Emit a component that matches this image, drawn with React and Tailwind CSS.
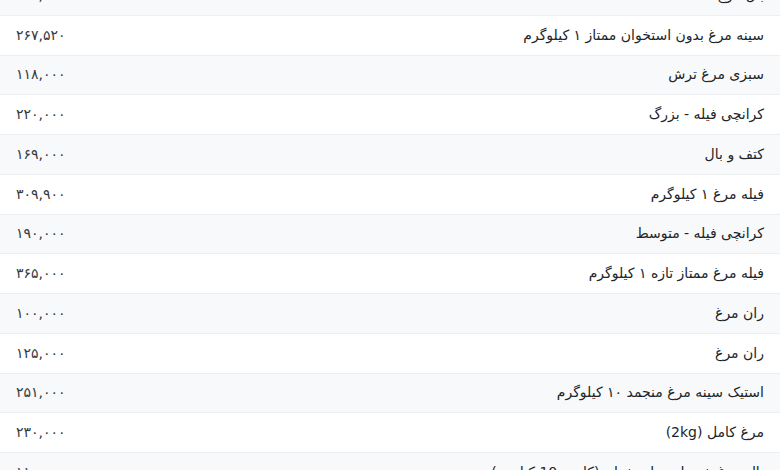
const rows = [
  { name: "بال مرغ", price: "۱۳۵,۰۰۰" },
  { name: "سینه مرغ بدون استخوان ممتاز ۱ کیلوگرم", price: "۲۶۷,۵۲۰" },
  { name: "سبزی مرغ ترش", price: "۱۱۸,۰۰۰" },
  { name: "کرانچی فیله - بزرگ", price: "۲۲۰,۰۰۰" },
  { name: "کتف و بال", price: "۱۶۹,۰۰۰" },
  { name: "فیله مرغ ۱ کیلوگرم", price: "۳۰۹,۹۰۰" },
  { name: "کرانچی فیله - متوسط", price: "۱۹۰,۰۰۰" },
  { name: "فیله مرغ ممتاز تازه ۱ کیلوگرم", price: "۳۶۵,۰۰۰" },
  { name: "ران مرغ", price: "۱۰۰,۰۰۰" },
  { name: "ران مرغ", price: "۱۲۵,۰۰۰" },
  { name: "استیک سینه مرغ منجمد ۱۰ کیلوگرم", price: "۲۵۱,۰۰۰" },
  { name: "مرغ کامل (2kg)", price: "۲۳۰,۰۰۰" },
  { name: "بال مرغ شنسل بی‌استخوان (کارتن 10 کیلویی)", price: "۱۱۰,۰۰۰" },
];

export default function App() {
  return (
    <div className="h-[470px] w-[780px] overflow-hidden bg-white">
      <div
        dir="rtl"
        className="-mt-[24px] text-[14px] text-[#212529]"
        style={{ fontFamily: "'DejaVu Sans', sans-serif" }}
      >
        {rows.map((r, i) => (
          <div
            key={i}
            className={
              "flex h-[39.75px] items-center justify-between border-b border-[#eceef1] px-4 " +
              (i % 2 === 0 ? "bg-[#f8f9fa]" : "bg-white")
            }
          >
            <span>{r.name}</span>
            <span className="text-[#343a40]">{r.price}</span>
          </div>
        ))}
      </div>
    </div>
  );
}
